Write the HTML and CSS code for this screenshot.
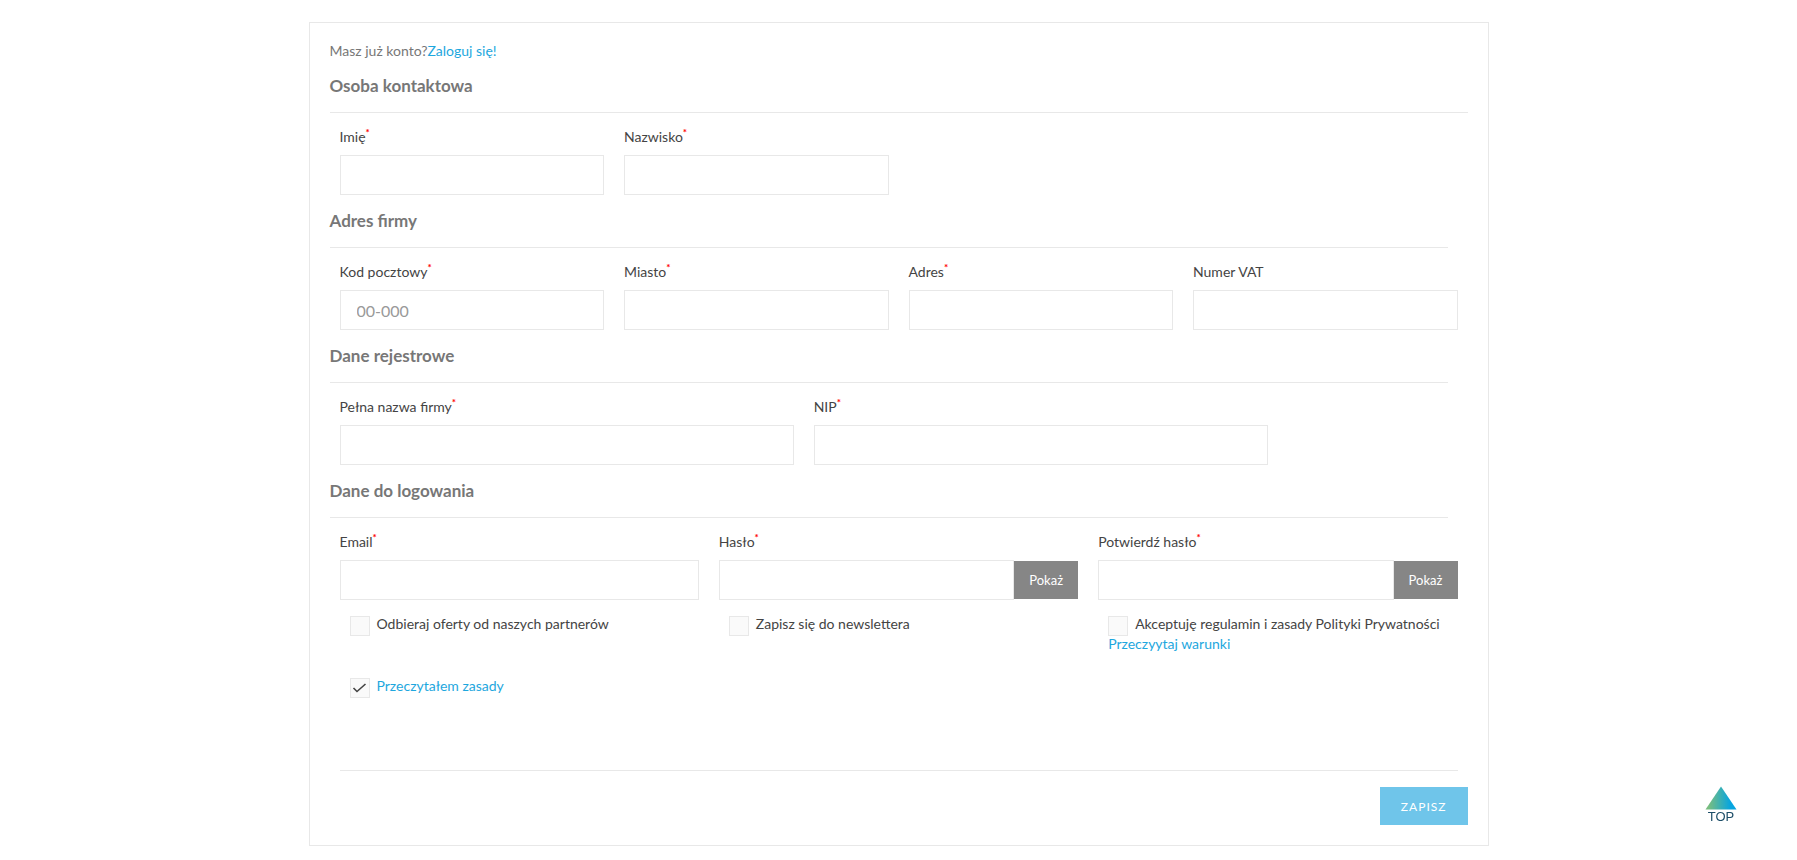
FILE: index.html
```html
<!DOCTYPE html>
<html lang="pl">
<head>
    <meta charset="UTF-8">
    <meta name="viewport" content="width=device-width, initial-scale=1.0">
    <title>Rejestracja</title>
    <link rel="stylesheet" href="styles.css">
</head>
<body>
    <main class="card">
        <p class="login-hint">Masz już konto?<a href="#">Zaloguj się!</a></p>
        <form class="register">
            <section>
                <h2 class="wide">Osoba kontaktowa</h2>
                <div class="row quarters">
                    <div class="field">
                        <label for="firstname">Imię<sup>*</sup></label>
                        <input type="text" id="firstname" name="firstname">
                    </div>
                    <div class="field">
                        <label for="lastname">Nazwisko<sup>*</sup></label>
                        <input type="text" id="lastname" name="lastname">
                    </div>
                </div>
            </section>
            <section>
                <h2>Adres firmy</h2>
                <div class="row quarters">
                    <div class="field">
                        <label for="postcode">Kod pocztowy<sup>*</sup></label>
                        <input type="text" id="postcode" name="postcode" placeholder="00-000">
                    </div>
                    <div class="field">
                        <label for="city">Miasto<sup>*</sup></label>
                        <input type="text" id="city" name="city">
                    </div>
                    <div class="field">
                        <label for="address">Adres<sup>*</sup></label>
                        <input type="text" id="address" name="address">
                    </div>
                    <div class="field">
                        <label for="vat">Numer VAT</label>
                        <input type="text" id="vat" name="vat">
                    </div>
                </div>
            </section>
            <section>
                <h2>Dane rejestrowe</h2>
                <div class="row company">
                    <div class="field">
                        <label for="company">Pełna nazwa firmy<sup>*</sup></label>
                        <input type="text" id="company" name="company">
                    </div>
                    <div class="field">
                        <label for="nip">NIP<sup>*</sup></label>
                        <input type="text" id="nip" name="nip">
                    </div>
                </div>
            </section>
            <section>
                <h2>Dane do logowania</h2>
                <div class="row thirds">
                    <div class="field">
                        <label for="email">Email<sup>*</sup></label>
                        <input type="email" id="email" name="email">
                    </div>
                    <div class="field">
                        <label for="password">Hasło<sup>*</sup></label>
                        <div class="input-group">
                            <input type="password" id="password" name="password">
                            <button type="button">Pokaż</button>
                        </div>
                    </div>
                    <div class="field">
                        <label for="confirm">Potwierdź hasło<sup>*</sup></label>
                        <div class="input-group">
                            <input type="password" id="confirm" name="confirm">
                            <button type="button">Pokaż</button>
                        </div>
                    </div>
                </div>
                <div class="row thirds checks">
                    <div class="check">
                        <input type="checkbox" id="offers" name="offers">
                        <label for="offers">Odbieraj oferty od naszych partnerów</label>
                    </div>
                    <div class="check">
                        <input type="checkbox" id="newsletter" name="newsletter">
                        <label for="newsletter">Zapisz się do newslettera</label>
                    </div>
                    <div class="check">
                        <input type="checkbox" id="terms" name="terms">
                        <label for="terms">Akceptuję regulamin i zasady Polityki Prywatności</label>
                        <a class="terms-link" href="#">Przeczyytaj warunki</a>
                    </div>
                    <div class="check">
                        <input type="checkbox" id="rules" name="rules" aria-labelledby="rules-link" checked>
                        <a href="#" id="rules-link">Przeczytałem zasady</a>
                    </div>
                </div>
            </section>
            <hr>
            <footer class="actions">
                <button type="submit">Zapisz</button>
            </footer>
        </form>
    </main>
    <a class="to-top" href="#">
        <svg width="32" height="24" viewBox="0 0 32 24" aria-hidden="true">
            <defs>
                <linearGradient id="top-gradient">
                    <stop offset="0.1" stop-color="#78bd80"/>
                    <stop offset="0.8" stop-color="#07a5df"/>
                </linearGradient>
            </defs>
            <path d="M16 0.5L31.5 23.5H0.5Z" fill="url(#top-gradient)"/>
        </svg>
        <span>TOP</span>
    </a>
    <script>
        const toggles = document.querySelectorAll('.input-group button')

        toggles.forEach((item) => {
            item.addEventListener('click', function () {
                const input = item.previousElementSibling
                const hidden = input.type === 'password'
                input.type = hidden ? 'text' : 'password'
                item.textContent = hidden ? 'Ukryj' : 'Pokaż'
            })
        })
    </script>
</body>
</html>
```
FILE: styles.css
```css
* {
    box-sizing: border-box;
}
body {
    margin: 0;
    background-color: white;
    color: #777;
    font-family: Lato, "Noto Sans", sans-serif;
    font-size: 14px;
    line-height: 20px;
}
a {
    color: #1ea7de;
    text-decoration: none;
}
button {
    border: none;
    border-radius: 0;
    color: white;
    font-family: inherit;
    font-size: 12px;
    cursor: pointer;
}
.card {
    max-width: 1180px;
    margin: 22px auto 12px;
    padding: 18px 20px 20px;
    border: 1px solid #e8e8e8;
}
.login-hint {
    margin: 0;
}
h2 {
    margin: 0 20px 14px 0;
    padding: 15px 0 16px;
    border-bottom: 1px solid #e8e8e8;
    font-size: 17px;
    font-weight: bold;
    line-height: 20px;
}
h2.wide {
    margin-right: 0;
}
section + section h2 {
    padding-top: 16px;
}
.row {
    display: grid;
    column-gap: 20px;
    padding: 0 10px;
}
.quarters {
    grid-template-columns: repeat(4, 1fr);
}
.company {
    grid-template-columns: repeat(12, 1fr);
}
.company .field {
    grid-column: span 5;
}
.thirds {
    grid-template-columns: repeat(3, 1fr);
}
.field {
    display: flex;
    flex-direction: column;
    gap: 8px;
}
label {
    color: #444;
}
sup {
    color: red;
    font-size: 10px;
    font-weight: bold;
    line-height: 0;
}
.field input {
    width: 100%;
    min-width: 0;
    height: 40px;
    padding: 0 16px;
    border: 1px solid #e8e8e8;
    border-radius: 0;
    background-color: white;
    color: #444;
    font-family: inherit;
    font-size: 16px;
}
.field input::placeholder {
    color: #999;
}
.input-group {
    display: flex;
}
.input-group button {
    flex: 0 0 64px;
    height: 38px;
    margin-top: 1px;
    padding: 0;
    background-color: #868686;
    font-size: 13px;
}
.checks {
    row-gap: 22px;
    padding-top: 14px;
}
.check {
    display: grid;
    grid-template-columns: 20px 1fr;
    grid-template-rows: 20px auto;
    column-gap: 7px;
    padding-left: 10px;
}
.check input {
    appearance: none;
    width: 20px;
    height: 20px;
    margin: 2px 0 0;
    border: 1px solid #e8e8e8;
    background-color: #fafafa;
}
.check input:checked {
    background-image: url("data:image/svg+xml,%3Csvg xmlns='http://www.w3.org/2000/svg' viewBox='0 0 18 18'%3E%3Cpath d='M2.5 9L6 12.5L14.5 5' fill='none' stroke='%23444' stroke-width='1.6'/%3E%3C/svg%3E");
}
.check .terms-link {
    grid-column: span 2;
}
hr {
    margin: 74px 10px 16px;
    border: none;
    border-top: 1px solid #e8e8e8;
}
.actions {
    display: flex;
    justify-content: flex-end;
}
.actions button {
    height: 38px;
    padding: 0 21px;
    background-color: #6fc5ea;
    letter-spacing: 1px;
    text-transform: uppercase;
}
.to-top {
    position: fixed;
    right: 60px;
    bottom: 36px;
    display: flex;
    flex-direction: column;
    align-items: center;
    color: #1d4e68;
    font-family: "Liberation Sans", sans-serif;
    font-size: 13px;
    line-height: 14px;
}
@media (max-width: 800px) {
    .row {
        grid-template-columns: 1fr;
        row-gap: 14px;
    }
    .company .field {
        grid-column: auto;
    }
}
```
